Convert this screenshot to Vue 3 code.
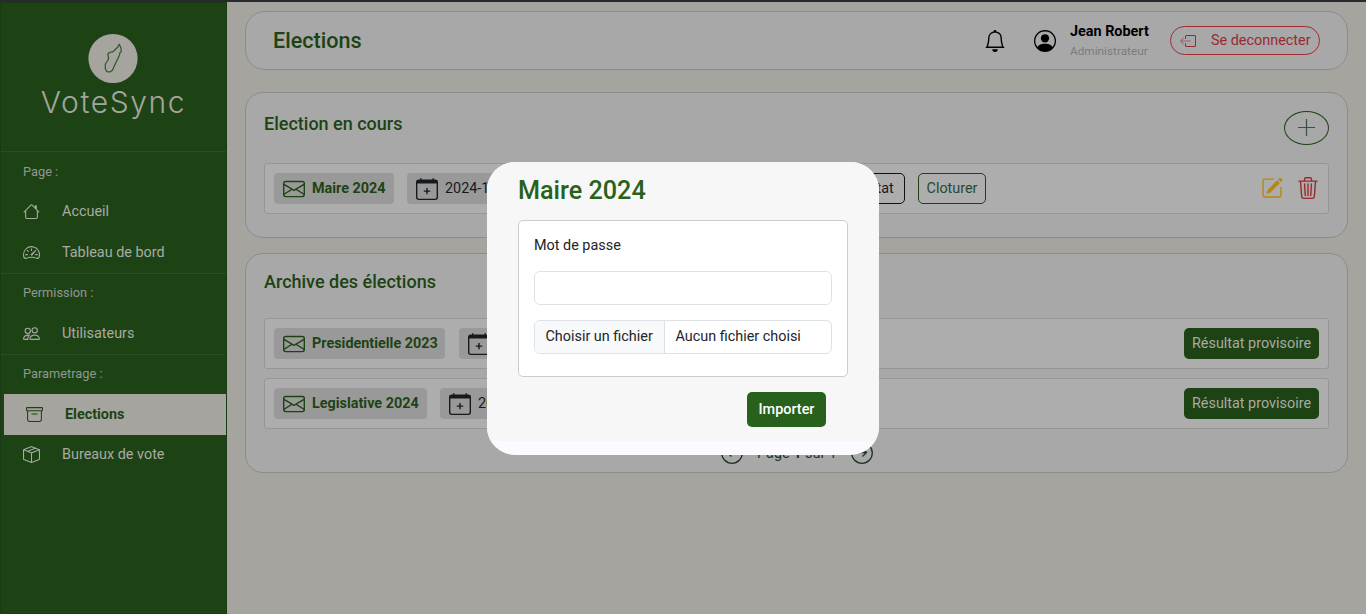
<script setup>
const icons = {
  house: ['M2 13.5V7h1v6.5a.5.5 0 0 0 .5.5h9a.5.5 0 0 0 .5-.5V7h1v6.5a1.5 1.5 0 0 1-1.5 1.5h-9A1.5 1.5 0 0 1 2 13.5zm11-11V6l-2-2V2.5a.5.5 0 0 1 .5-.5h1a.5.5 0 0 1 .5.5z', 'M7.293 1.5a1 1 0 0 1 1.414 0l6.647 6.646a.5.5 0 0 1-.708.708L8 2.207 1.354 8.854a.5.5 0 1 1-.708-.708L7.293 1.5z'],
  gauge: ['M8 4a.5.5 0 0 1 .5.5V6a.5.5 0 0 1-1 0V4.5A.5.5 0 0 1 8 4zM3.732 5.732a.5.5 0 0 1 .707 0l.915.914a.5.5 0 1 1-.708.708l-.914-.915a.5.5 0 0 1 0-.707zM2 10a.5.5 0 0 1 .5-.5h1.586a.5.5 0 0 1 0 1H2.5A.5.5 0 0 1 2 10zm9.5 0a.5.5 0 0 1 .5-.5h1.5a.5.5 0 0 1 0 1H12a.5.5 0 0 1-.5-.5zm.754-4.246a.389.389 0 0 0-.527-.02L7.547 9.31a.91.91 0 1 0 1.302 1.258l3.434-4.297a.389.389 0 0 0-.029-.518z', 'M0 10a8 8 0 1 1 15.547 2.661c-.442 1.253-1.845 1.602-2.932 1.25C11.309 13.488 9.475 13 8 13c-1.474 0-3.31.488-4.615.911-1.087.352-2.49.003-2.932-1.25A7.988 7.988 0 0 1 0 10zm8-7a7 7 0 0 0-6.603 9.329c.203.575.923.876 1.68.63C4.397 12.533 6.358 12 8 12s3.604.532 4.923.96c.757.245 1.477-.056 1.68-.631A7 7 0 0 0 8 3z'],
  people: ['M15 14s1 0 1-1-1-4-5-4-5 3-5 4 1 1 1 1h8zm-7.978-1A.261.261 0 0 1 7 12.996c.001-.264.167-1.03.76-1.72C8.312 10.629 9.282 10 11 10c1.717 0 2.687.63 3.24 1.276.593.69.758 1.457.76 1.72l-.008.002a.274.274 0 0 1-.014.002H7.022zM11 7a2 2 0 1 0 0-4 2 2 0 0 0 0 4zm3-2a3 3 0 1 1-6 0 3 3 0 0 1 6 0zM6.936 9.28a5.88 5.88 0 0 0-1.23-.247A7.35 7.35 0 0 0 5 9c-4 0-5 3-5 4 0 .667.333 1 1 1h4.216A2.238 2.238 0 0 1 5 13c0-1.01.377-2.042 1.09-2.904.243-.294.526-.569.846-.816zM4.92 10A5.493 5.493 0 0 0 4 13H1c0-.26.164-1.03.76-1.724.545-.636 1.492-1.256 3.16-1.275zM1.5 5.5a3 3 0 1 1 6 0 3 3 0 0 1-6 0zm3-2a2 2 0 1 0 0 4 2 2 0 0 0 0-4z'],
  archive: ['M0 2a1 1 0 0 1 1-1h14a1 1 0 0 1 1 1v2a1 1 0 0 1-1 1v7.5a2.5 2.5 0 0 1-2.5 2.5h-9A2.5 2.5 0 0 1 1 12.5V5a1 1 0 0 1-1-1V2zm2 3v7.5A1.5 1.5 0 0 0 3.5 14h9a1.5 1.5 0 0 0 1.5-1.5V5H2zm13-3H1v2h14V2zM5 7.5a.5.5 0 0 1 .5-.5h5a.5.5 0 0 1 0 1h-5a.5.5 0 0 1-.5-.5z'],
  box: ['M8.186 1.113a.5.5 0 0 0-.372 0L1.846 3.5l2.404.961L10.404 2l-2.218-.887zm3.564 1.426L5.596 5 8 5.961 14.154 3.5l-2.404-.961zm3.25 1.7-6.5 2.6v7.922l6.5-2.6V4.24zM7.5 14.762V6.838L1 4.239v7.923l6.5 2.6zM7.443.184a1.5 1.5 0 0 1 1.114 0l7.129 2.852A.5.5 0 0 1 16 3.5v8.662a1 1 0 0 1-.629.928l-7.185 2.874a.5.5 0 0 1-.372 0L.63 13.09a1 1 0 0 1-.63-.928V3.5a.5.5 0 0 1 .314-.464L7.443.184z'],
  bell: ['M8 16a2 2 0 0 0 2-2H6a2 2 0 0 0 2 2zM8 1.918l-.797.161A4.002 4.002 0 0 0 4 6c0 .628-.134 2.197-.459 3.742-.16.767-.376 1.566-.663 2.258h10.244c-.287-.692-.502-1.49-.663-2.258C12.134 8.197 12 6.628 12 6a4.002 4.002 0 0 0-3.203-3.92L8 1.917zM14.22 12c.223.447.481.801.78 1H1c.299-.199.557-.553.78-1C2.68 10.2 3 6.88 3 6c0-2.42 1.72-4.44 4.005-4.901a1 1 0 1 1 1.99 0A5.002 5.002 0 0 1 13 6c0 .88.32 4.2 1.22 6z'],
  person: ['M11 6a3 3 0 1 1-6 0 3 3 0 0 1 6 0z', 'M0 8a8 8 0 1 1 16 0A8 8 0 0 1 0 8zm8-7a7 7 0 0 0-5.468 11.37C3.242 11.226 4.805 10 8 10s4.757 1.225 5.468 2.37A7 7 0 0 0 8 1z'],
  logout: ['M6 12.5a.5.5 0 0 0 .5.5h8a.5.5 0 0 0 .5-.5v-9a.5.5 0 0 0-.5-.5h-8a.5.5 0 0 0-.5.5v2a.5.5 0 0 1-1 0v-2A1.5 1.5 0 0 1 6.5 2h8A1.5 1.5 0 0 1 16 3.5v9a1.5 1.5 0 0 1-1.5 1.5h-8A1.5 1.5 0 0 1 5 12.5v-2a.5.5 0 0 1 1 0v2z', 'M.146 8.354a.5.5 0 0 1 0-.708l3-3a.5.5 0 1 1 .708.708L1.707 7.5H10.5a.5.5 0 0 1 0 1H1.707l2.147 2.146a.5.5 0 0 1-.708.708l-3-3z'],
  envelope: ['M0 4a2 2 0 0 1 2-2h12a2 2 0 0 1 2 2v8a2 2 0 0 1-2 2H2a2 2 0 0 1-2-2V4Zm2-1a1 1 0 0 0-1 1v.217l7 4.2 7-4.2V4a1 1 0 0 0-1-1H2Zm13 2.383-4.708 2.825L15 11.105V5.383Zm-.034 6.876-5.64-3.471L8 9.583l-1.326-.795-5.64 3.47A1 1 0 0 0 2 13h12a1 1 0 0 0 .966-.741ZM1 11.105l4.708-2.897L1 5.383v5.722Z'],
  calendar: ['M8 7a.5.5 0 0 1 .5.5V9H10a.5.5 0 0 1 0 1H8.5v1.5a.5.5 0 0 1-1 0V10H6a.5.5 0 0 1 0-1h1.5V7.5A.5.5 0 0 1 8 7z', 'M3.5 0a.5.5 0 0 1 .5.5V1h8V.5a.5.5 0 0 1 1 0V1h1a2 2 0 0 1 2 2v11a2 2 0 0 1-2 2H2a2 2 0 0 1-2-2V3a2 2 0 0 1 2-2h1V.5a.5.5 0 0 1 .5-.5zM1 4v10a1 1 0 0 0 1 1h12a1 1 0 0 0 1-1V4H1z'],
  pencil: ['M15.502 1.94a.5.5 0 0 1 0 .706L14.459 3.69l-2-2L13.502.646a.5.5 0 0 1 .707 0l1.293 1.293zm-1.75 2.456-2-2L4.939 9.21a.5.5 0 0 0-.121.196l-.805 2.414a.25.25 0 0 0 .316.316l2.414-.805a.5.5 0 0 0 .196-.12l6.813-6.814z', 'M1 13.5A1.5 1.5 0 0 0 2.5 15h11a1.5 1.5 0 0 0 1.5-1.5v-6a.5.5 0 0 0-1 0v6a.5.5 0 0 1-.5.5h-11a.5.5 0 0 1-.5-.5v-11a.5.5 0 0 1 .5-.5H9a.5.5 0 0 0 0-1H2.5A1.5 1.5 0 0 0 1 2.5v11z'],
  trash: ['M6.5 1h3a.5.5 0 0 1 .5.5v1H6v-1a.5.5 0 0 1 .5-.5ZM11 2.5v-1A1.5 1.5 0 0 0 9.5 0h-3A1.5 1.5 0 0 0 5 1.5v1H1.5a.5.5 0 0 0 0 1h.538l.853 10.66A2 2 0 0 0 4.885 16h6.23a2 2 0 0 0 1.994-1.84l.853-10.66h.538a.5.5 0 0 0 0-1H11Zm1.958 1-.846 10.58a1 1 0 0 1-.997.92h-6.23a1 1 0 0 1-.997-.92L3.042 3.5h9.916Zm-7.487 1a.5.5 0 0 1 .528.47l.5 8.5a.5.5 0 0 1-.998.06L5 5.03a.5.5 0 0 1 .47-.53Zm5.058 0a.5.5 0 0 1 .47.53l-.5 8.5a.5.5 0 1 1-.998-.06l.5-8.5a.5.5 0 0 1 .528-.47ZM8 4.5a.5.5 0 0 1 .5.5v8.5a.5.5 0 0 1-1 0V5a.5.5 0 0 1 .5-.5Z'],
}

const sections = [
  { label: 'Page :', items: [{ icon: 'house', text: 'Accueil' }, { icon: 'gauge', text: 'Tableau de bord' }] },
  { label: 'Permission :', items: [{ icon: 'people', text: 'Utilisateurs' }] },
  { label: 'Parametrage :', items: [{ icon: 'archive', text: 'Elections', active: true }, { icon: 'box', text: 'Bureaux de vote' }] },
]

const archives = [
  { name: 'Presidentielle 2023', date: '2023', cls: 'w171' },
  { name: 'Legislative 2024', date: '2024', cls: 'w153' },
]
</script>

<template>
  <div class="screen">
    <aside class="sidebar">
      <div class="brand">
        <svg class="brand-mark" width="50" height="50" viewBox="0 0 50 50">
          <circle cx="25" cy="25.5" r="24.6" fill="#a5a49f" />
          <path d="M31.3 11.3 29.6 14.2 27 16.7 25.3 18.7 21.3 19.5 19.8 21.3 20.6 24.5 19.9 27.5 17.3 31 17.3 35.5 18.8 38.7 22.5 38.8 24.4 37.3 27.2 31 31.5 22.2 32 19.5 33.2 19 33 15.2Z" fill="none" stroke="#2f5527" stroke-width="1.2" stroke-linejoin="round" />
        </svg>
        <div class="brand-name">VoteSync</div>
      </div>
      <nav v-for="s in sections" :key="s.label" class="section">
        <div class="section-label">{{ s.label }}</div>
        <a v-for="i in s.items" :key="i.text" class="item" :class="{ active: i.active }">
          <svg width="17" height="17" viewBox="0 0 16 16" fill="currentColor"><path v-for="d in icons[i.icon]" :key="d" :d="d" fill-rule="evenodd" /></svg>
          <span>{{ i.text }}</span>
        </a>
      </nav>
    </aside>

    <main class="main">
      <header class="card topbar">
        <h1>Elections</h1>
        <svg class="bell" width="22" height="22" viewBox="0 0 16 16"><path v-for="d in icons.bell" :key="d" :d="d" /></svg>
        <svg class="avatar" width="22" height="22" viewBox="0 0 16 16"><path v-for="d in icons.person" :key="d" :d="d" fill-rule="evenodd" /></svg>
        <div class="user">
          <div class="user-name">Jean Robert</div>
          <div class="user-role">Administrateur</div>
        </div>
        <button class="logout">
          <svg width="16" height="16" viewBox="0 0 16 16" fill="currentColor"><path :d="icons.logout[0]" /><path :d="icons.logout[1]" opacity=".55" /></svg>
          <span>Se deconnecter</span>
        </button>
      </header>

      <section class="card current">
        <div class="card-head">
          <h2>Election en cours</h2>
          <button class="add">
            <svg width="17" height="17" viewBox="0 0 17 17"><path d="M8.5.5v16M.5 8.5h16" fill="none" stroke="#3a4f47" stroke-width="1.2" stroke-linecap="round" /></svg>
          </button>
        </div>
        <div class="row">
          <span class="badge name w120"><svg width="22" height="22" viewBox="0 0 16 16" fill="currentColor"><path :d="icons.envelope[0]" /></svg><b>Maire 2024</b></span>
          <span class="badge date long"><svg width="22" height="22" viewBox="0 0 16 16" fill="currentColor"><path v-for="d in icons.calendar" :key="d" :d="d" /></svg><span>2024-11-20</span></span>
          <button class="outline dark">Resultat</button>
          <button class="outline">Cloturer</button>
          <span class="tools">
            <svg width="22" height="22" viewBox="0 0 16 16" fill="#b78710"><path v-for="d in icons.pencil" :key="d" :d="d" /></svg>
            <svg width="22" height="22" viewBox="0 0 16 16" fill="#982a2c"><path :d="icons.trash[0]" /></svg>
          </span>
        </div>
      </section>

      <section class="card archive">
        <h2>Archive des élections</h2>
        <div v-for="a in archives" :key="a.name" class="row">
          <span class="badge name" :class="a.cls"><svg width="22" height="22" viewBox="0 0 16 16" fill="currentColor"><path :d="icons.envelope[0]" /></svg><b>{{ a.name }}</b></span>
          <span class="badge date"><svg width="22" height="22" viewBox="0 0 16 16" fill="currentColor"><path v-for="d in icons.calendar" :key="d" :d="d" /></svg><span>{{ a.date }}</span></span>
          <button class="result">Résultat provisoire</button>
        </div>
        <div class="pager">
          <svg width="22" height="22" viewBox="0 0 22 22"><circle cx="11" cy="11" r="10.3" /><path d="M16 10.5H6.5M10.500 6.500l-4 4 4 4" /></svg>
          <span>Page <b>1</b> sur 1</span>
          <svg width="22" height="22" viewBox="0 0 22 22"><circle cx="11" cy="11" r="10.3" /><path d="M6 10.5h9.5M11.500 6.500l4 4-4 4" /></svg>
        </div>
      </section>
    </main>

    <div class="modal">
      <div class="modal-body">
        <h3>Maire 2024</h3>
        <div class="form">
          <label>Mot de passe</label>
          <input class="password" type="password" />
          <div class="file">
            <span class="file-button">Choisir un fichier</span>
            <span class="file-name">Aucun fichier choisi</span>
          </div>
        </div>
        <button class="import">Importer</button>
      </div>
    </div>
  </div>
</template>

<style>
body { margin: 0; overflow: hidden; }
</style>

<style scoped>
* { box-sizing: border-box; }
.screen {
  position: relative; display: flex; width: 1366px; height: 614px;
  border-top: 2px solid #2a292d; background: #a5a49f; overflow: hidden;
  font-family: Roboto, "Liberation Sans", sans-serif; font-size: 14.4px; color: #171a1d;
}
button { font: inherit; letter-spacing: inherit; margin: 0; padding: 0; }
h1, h2, h3 { margin: 0; font-weight: 500; color: #1d4314; }
svg { flex: none; display: block; }

.sidebar { width: 227px; height: 612px; background: #1d4314; border: 1px solid #1a3a13; flex: none; color: #a9aaa6; }
.brand { height: 148px; padding-top: 30px; display: flex; flex-direction: column; align-items: center; }
.brand-mark { margin-right: 2px; }
.brand-name { font-family: Inter, sans-serif; font-weight: 300; font-size: 30px; line-height: 38px; letter-spacing: 1.6px; white-space: nowrap; color: #a5a49f; }
.section { border-top: 1px solid #2a4e22; }
.section-label { height: 39px; padding-left: 22px; line-height: 40px; font-size: 12.8px; color: #929691; }
.section + .section .section-label { line-height: 38px; }
.item { height: 41px; display: flex; align-items: center; padding-left: 22px; }
.item span { margin-left: 22px; }
.item.active { margin-left: 3px; background: #a5a49f; color: #1d4314; font-weight: 700; }
.item.active + .item { height: 39px; }

.main { flex: 1; padding: 9px 18px 0; }
.card { border: 1px solid #8b8c8c; border-radius: 18px; background: #a8a8a8; }
.topbar { height: 59px; width: 1103px; border-radius: 20px; display: flex; align-items: center; padding: 0 27px; }
.topbar h1 { font-size: 21.6px; margin-right: auto; }
.bell { margin-right: 28px; }
.avatar { margin-right: 14px; }
.user { width: 100px; color: #000; padding-top: 1px; }
.user-name { font-weight: 700; line-height: 19px; }
.user-role { font-size: 11.8px; line-height: 20px; color: #7b7c7c; }
.logout { width: 150px; height: 29px; border: 1px solid #a52a30; border-radius: 15px; background: none; color: #982a30; display: flex; align-items: center; padding-left: 9px; }
.logout span { margin-left: 15px; }
.current { width: 1103px; height: 146px; margin-top: 22px; padding: 18px; }
.card-head { display: flex; justify-content: space-between; align-items: flex-start; height: 52px; }
h2 { font-size: 18px; line-height: 26px; }
.add { width: 45px; height: 34px; border: 1px solid #1d4314; border-radius: 50%; background: none; display: grid; place-items: center; padding-bottom: 2px; }
.row { width: 1065px; height: 51px; border: 1px solid #969696; border-radius: 3px; background: #adadad; display: flex; align-items: center; padding: 0 9px; }
.badge { height: 31px; border-radius: 4px; background: #999; display: flex; align-items: center; padding-left: 9px; }
.name { margin-right: 13px; color: #1d4314; }
.name.w171 { margin-right: 14px; }
.name b { margin-left: 7px; }
.date span { margin-left: 7px; }
.date { width: 140px; }
.long { width: 409px; margin-right: 14px; }
.w120 { width: 120px; }
.w171 { width: 171px; }
.w153 { width: 153px; }
.outline { height: 31px; width: 68px; border: 1px solid #1d4314; border-radius: 5px; background: none; color: #244a32; }
.outline.dark { width: 75px; border-color: #111; color: #171a1d; margin-right: 13px; }
.tools { margin-left: auto; display: flex; gap: 14px; padding-bottom: 2px; }
.archive { width: 1103px; height: 220px; margin-top: 15px; padding: 15px 18px; }
.archive h2 { height: 49px; }
.archive .row + .row { margin-top: 9px; }
.result { margin-left: auto; width: 135px; height: 31px; border: 0; border-radius: 5px; background: #1d4314; color: #a9aaa6; }
.pager { display: flex; align-items: center; justify-content: center; gap: 14px; margin: 13px 0 0 1px; color: #1d3424; }
.pager svg { fill: none; stroke: #1d3424; stroke-width: 1.3; }

.modal { position: absolute; left: 487px; top: 160px; width: 392px; height: 293px; border-radius: 28px; background: #fafaff; overflow: hidden; }
.modal-body { height: 279px; padding: 11px 31px 0; background: #f7f7f7; display: flex; flex-direction: column; }
.modal h3 { font-size: 25.2px; line-height: 36px; height: 47px; color: #28611c; }
.form { height: 157px; border: 1px solid #ccc; border-radius: 5px; background: #fff; padding: 15px; }
label { display: block; height: 35px; line-height: 20px; color: #212529; }
.password { display: block; width: 298px; height: 34px; border: 1px solid #dee2e6; border-radius: 6px; background: #fff; }
.file { display: flex; margin-top: 15px; height: 34px; border: 1px solid #dee2e6; border-radius: 6px; overflow: hidden; color: #212529; line-height: 31px; }
.file-button { width: 130px; padding-left: 10.5px; background: #f8f9fa; border-right: 1px solid #dee2e6; white-space: nowrap; }
.file-name { padding-left: 10.5px; }
.import { align-self: flex-end; width: 79px; height: 35px; margin: 15px 22px 0 0; border: 0; border-radius: 5px; background: #28611c; color: #fff; font-weight: 500; }
</style>
